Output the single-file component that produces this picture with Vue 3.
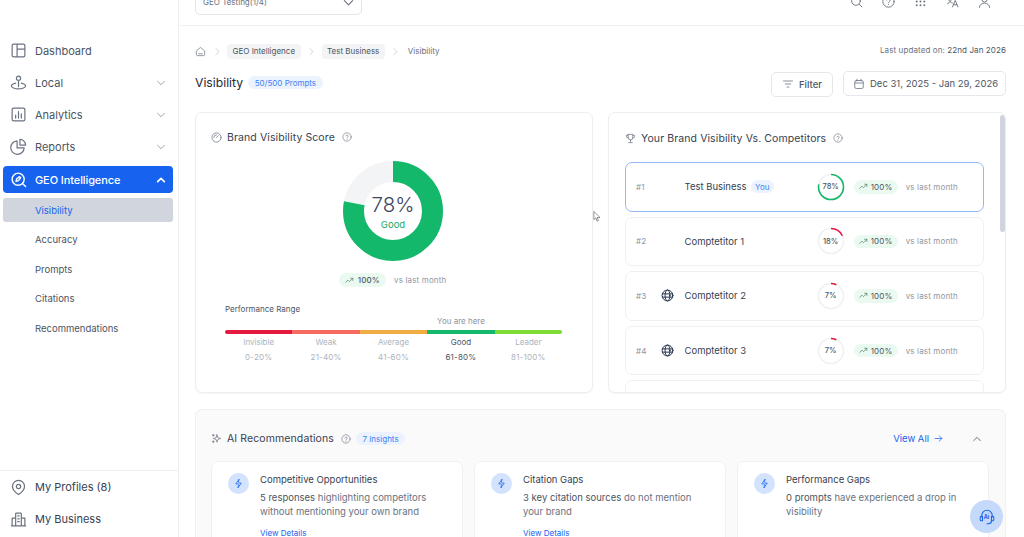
<template>
<div class="page">
	<aside class="sidebar">
		<nav class="nav">
			<div v-for="item in navItems" :key="item.label" class="nav-item" :class="{ active: item.active }">
				<svg class="nav-icon" viewBox="0 0 24 24"><path v-for="d in item.icon" :key="d" :d="d" /></svg>
				<span class="nav-label">{{ item.label }}</span>
				<svg v-if="item.caret" class="caret" viewBox="0 0 12 12"><path :d="item.active ? 'M2 8l4-4 4 4' : 'M2 4l4 4 4-4'" /></svg>
			</div>
			<div class="subnav">
				<div v-for="sub in subItems" :key="sub" class="sub-item" :class="{ current: sub == 'Visibility' }">{{ sub }}</div>
			</div>
		</nav>
		<div class="side-foot">
			<div v-for="item in footItems" :key="item.label" class="nav-item">
				<svg class="nav-icon" viewBox="0 0 24 24"><path v-for="d in item.icon" :key="d" :d="d" /></svg>
				<span class="nav-label dark">{{ item.label }}</span>
			</div>
		</div>
	</aside>

	<div class="content">
		<header class="topbar">
			<div class="select">
				<span>GEO Testing(1/4)</span>
				<svg class="select-caret" viewBox="0 0 12 12"><path d="M1.5 4l4.5 4.5L10.5 4" /></svg>
			</div>
			<div class="top-icons">
				<svg viewBox="0 0 24 24"><circle cx="11" cy="11" r="8" /><path d="M17 17l5 5" /></svg>
				<svg viewBox="0 0 24 24"><circle cx="12" cy="12" r="10.500" /><path d="M9.200 9.300a2.900 2.900 0 0 1 5.600 1c0 2-2.800 2.400-2.800 4M12 17.600v.2" /></svg>
				<svg viewBox="0 0 24 24" class="dots"><circle v-for="p in dots" :key="p[0] + '-' + p[1]" :cx="p[0]" :cy="p[1]" r="1.800" /></svg>
				<svg viewBox="0 0 24 24"><path d="M2 5h11M7 2v3M11 5c-1 5-4 9-8 11M5 9c1 3 4 5 7 6M12 22l5-12 5 12M14 18h6" /></svg>
				<svg viewBox="0 0 24 24"><circle cx="12" cy="8" r="5" /><path d="M2.500 23c.5-5 4.500-8 9.500-8s9 3 9.500 8" /></svg>
			</div>
		</header>

		<main class="main">
			<div class="crumb-row">
				<div class="crumbs">
					<svg class="home" viewBox="0 0 24 24"><path d="M3 11l9-8 9 8v8a2 2 0 0 1-2 2H5a2 2 0 0 1-2-2zM8 17h8" /></svg>
					<svg class="sep" viewBox="0 0 12 12"><path d="M4 2l4 4-4 4" /></svg>
					<span class="crumb">GEO Intelligence</span>
					<svg class="sep" viewBox="0 0 12 12"><path d="M4 2l4 4-4 4" /></svg>
					<span class="crumb">Test Business</span>
					<svg class="sep" viewBox="0 0 12 12"><path d="M4 2l4 4-4 4" /></svg>
					<span class="crumb-last">Visibility</span>
				</div>
				<div class="updated">Last updated on: <b>22nd Jan 2026</b></div>
			</div>

			<div class="title-row">
				<h1>Visibility</h1>
				<span class="badge up">50/500 Prompts</span>
				<div class="spacer"></div>
				<button class="btn filter">
					<svg viewBox="0 0 24 24"><path d="M3 6h18M6.500 12h11M10 18h4" /></svg>
					Filter
				</button>
				<button class="btn dates">
					<svg viewBox="0 0 24 24"><rect x="3.500" y="5" width="17" height="16" rx="3" /><path d="M3.500 10h17M8 2.500V6M16 2.500V6" /></svg>
					Dec 31, 2025 - Jan 29, 2026
				</button>
			</div>

			<div class="panels">
				<section class="panel score">
					<div class="panel-title">
						<svg class="t-icon" viewBox="0 0 24 24"><circle cx="12" cy="12" r="10" /><path d="M12 12l4-4M6 12a6 6 0 0 1 6-6" /></svg>
						<span>Brand Visibility Score</span>
						<svg class="help" viewBox="0 0 24 24"><circle cx="12" cy="12" r="10" /><path d="M9.200 9.300a2.900 2.900 0 0 1 5.600 1c0 2-2.800 2.400-2.800 4M12 17.600v.2" /></svg>
					</div>
					<div class="donut">
						<svg viewBox="0 0 100 100">
							<circle class="donut-bg" cx="50" cy="50" r="39.500" />
							<circle class="donut-fg" cx="50" cy="50" r="39.500" stroke-dasharray="193.600 248.200" transform="rotate(-90 50 50)" />
						</svg>
						<div class="donut-text">
							<div class="donut-num">78%</div>
							<div class="donut-word">Good</div>
						</div>
					</div>
					<div class="trend-row">
						<span class="pill">
							<svg viewBox="0 0 24 24"><path d="M2 17l6-6 4 4 9-9M15 6h6v6" /></svg>
							100%
						</span>
						<span class="vs">vs last month</span>
					</div>
					<div class="range-title">Performance Range</div>
					<div class="you-here">You are here</div>
					<div class="range">
						<div v-for="r in ranges" :key="r.name" class="range-col" :class="{ on: r.name == 'Good' }">
							<div class="range-bar" :style="{ background: r.color }"></div>
							<div class="range-name">{{ r.name }}</div>
							<div class="range-val">{{ r.val }}</div>
						</div>
					</div>
				</section>

				<section class="panel rivals">
					<div class="panel-title">
						<svg class="t-icon" viewBox="0 0 24 24"><path d="M7 3h10v7a5 5 0 0 1-10 0zM7 5H3v2a4 4 0 0 0 4 4M17 5h4v2a4 4 0 0 1-4 4M12 15v4M8 21h8" /></svg>
						<span>Your Brand Visibility Vs. Competitors</span>
						<svg class="help" viewBox="0 0 24 24"><circle cx="12" cy="12" r="10" /><path d="M9.200 9.300a2.900 2.900 0 0 1 5.600 1c0 2-2.800 2.400-2.800 4M12 17.600v.2" /></svg>
					</div>
					<div class="rows">
						<div v-for="(row, i) in rows" :key="i" class="row" :class="{ mine: row.you }">
							<span class="rank">#{{ i + 1 }}</span>
							<span class="globe">
								<svg v-if="row.globe" viewBox="0 0 24 24"><circle cx="12" cy="12" r="10" /><ellipse cx="12" cy="12" rx="4.500" ry="10" /><path d="M2.500 9h19M2.500 15h19" /></svg>
							</span>
							<span class="name">{{ row.name }}</span>
							<span v-if="row.you" class="you">You</span>
							<div class="spacer"></div>
							<div class="ring">
								<svg viewBox="0 0 28 28">
									<circle class="ring-bg" cx="14" cy="14" r="12.500" />
									<circle class="ring-fg" cx="14" cy="14" r="12.500" :stroke="row.color" :stroke-dasharray="(row.pct * 0.785) + ' 78.500'" transform="rotate(-90 14 14)" />
								</svg>
								<span>{{ row.pct }}%</span>
							</div>
							<span class="pill small">
								<svg viewBox="0 0 24 24"><path d="M2 17l6-6 4 4 9-9M15 6h6v6" /></svg>
								100%
							</span>
							<span class="vs">vs last month</span>
						</div>
						<!-- next row only peeks in above the fold -->
						<div class="row"></div>
					</div>
					<div class="scroll-thumb"></div>
				</section>
			</div>

			<section class="recs">
				<div class="recs-head">
					<svg class="t-icon" viewBox="0 0 24 24"><path d="M13 4l2 6 6 2-6 2-2 6-2-6-6-2 6-2zM5 3v4M3 5h4M5 17v4M3 19h4" /></svg>
					<span class="recs-title">AI Recommendations</span>
					<svg class="help" viewBox="0 0 24 24"><circle cx="12" cy="12" r="10" /><path d="M9.200 9.300a2.900 2.900 0 0 1 5.600 1c0 2-2.800 2.400-2.800 4M12 17.600v.2" /></svg>
					<span class="badge">7 Insights</span>
					<div class="spacer"></div>
					<span class="view-all">View All
						<svg viewBox="0 0 24 24"><path d="M3 12h18M14 5l7 7-7 7" /></svg>
					</span>
					<svg class="recs-caret" viewBox="0 0 12 12"><path d="M2 8l4-4 4 4" /></svg>
				</div>
				<div class="rec-grid">
					<div v-for="c in recCards" :key="c.title" class="rec">
						<span class="bolt">
							<svg viewBox="0 0 24 24"><path d="M13 3L6 13h5M11 21l7-10h-5M13 3l-1 6M11 21l1-6" /></svg>
						</span>
						<div class="rec-body">
							<div class="rec-title">{{ c.title }}</div>
							<p><b>{{ c.lead }}</b> {{ c.text }}</p>
							<a v-if="c.link" class="rec-link">View Details</a>
						</div>
					</div>
				</div>
			</section>
		</main>
	</div>

	<div class="assist">
		<svg viewBox="0 0 24 24"><path d="M5 12V10a7 7 0 0 1 14 0v2M5 11h-.5A1.500 1.500 0 0 0 3 12.500v3A1.500 1.500 0 0 0 4.500 17H6v-6zM19 11h.5a1.500 1.500 0 0 1 1.500 1.500v3a1.500 1.500 0 0 1-1.500 1.500H18v-6zM18 17c0 2.500-2 4-4 4h-2" /></svg>
		<span>Ai</span>
	</div>

	<svg class="cursor" viewBox="0 0 10 14"><path d="M1 1v10l2.500-2.200L5.200 13l1.600-.7L5 8.300h3.300z" /></svg>
</div>
</template>

<script setup>
	const navItems = [
		{ label: 'Dashboard', icon: ['M5 3h14a2 2 0 0 1 2 2v14a2 2 0 0 1-2 2H5a2 2 0 0 1-2-2V5a2 2 0 0 1 2-2zM10 3v18M10 10h11'] },
		{ label: 'Local', caret: true, icon: ['M12 3a3 3 0 1 1 0 6 3 3 0 0 1 0-6zM12 9v9M8 13c-3 .7-6 2-6 4s4.500 4 10 4 10-2 10-4-3-3.300-6-4'] },
		{ label: 'Analytics', caret: true, icon: ['M5 3h14a2 2 0 0 1 2 2v14a2 2 0 0 1-2 2H5a2 2 0 0 1-2-2V5a2 2 0 0 1 2-2zM8 17v-4M12 17V8M16 17v-6'] },
		{ label: 'Reports', caret: true, icon: ['M10 4a9.500 9.500 0 1 0 10 10H10zM14 2a8 8 0 0 1 8 8h-8z'] },
		{ label: 'GEO Intelligence', caret: true, active: true, icon: ['M11.500 3a8.500 8.500 0 1 1 0 17 8.500 8.500 0 0 1 0-17zM18 18l4 4M8.500 14.500l1-3.500 4-3 1.500 1.500-3 4z'] },
	]
	const subItems = ['Visibility', 'Accuracy', 'Prompts', 'Citations', 'Recommendations']
	const footItems = [
		{ label: 'My Profiles (8)', icon: ['M12 2a8.500 8.500 0 0 1 8.500 8.500c0 5-5 9-8.500 11.500-3.500-2.500-8.500-6.500-8.500-11.500A8.500 8.500 0 0 1 12 2zM12 7.500a3 3 0 1 1 0 6 3 3 0 0 1 0-6z'] },
		{ label: 'My Business', icon: ['M8 21V4a1 1 0 0 1 1-1h6a1 1 0 0 1 1 1v17M8 10H3v11h18V10h-5M11 7h2M11 11h2M11 15h2M2 21h20'] },
	]
	const dots = [[5, 5], [12, 5], [19, 5], [5, 12], [12, 12], [19, 12], [5, 19], [12, 19], [19, 19]]
	const ranges = [
		{ name: 'Invisible', val: '0-20%', color: '#e5183f' },
		{ name: 'Weak', val: '21-40%', color: '#f56b5f' },
		{ name: 'Average', val: '41-60%', color: '#f0ad44' },
		{ name: 'Good', val: '61-80%', color: '#14b86b' },
		{ name: 'Leader', val: '81-100%', color: '#7ddc35' },
	]
	const rows = [
		{ name: 'Test Business', you: true, pct: 78, color: '#14b86b' },
		{ name: 'Comptetitor 1', pct: 18, color: '#e5183f' },
		{ name: 'Comptetitor 2', globe: true, pct: 7, color: '#e5183f' },
		{ name: 'Comptetitor 3', globe: true, pct: 7, color: '#e5183f' },
	]
	const recCards = [
		{ title: 'Competitive Opportunities', lead: '5 responses', text: 'highlighting competitors without mentioning your own brand', link: true },
		{ title: 'Citation Gaps', lead: '3 key citation sources', text: 'do not mention your brand', link: true },
		{ title: 'Performance Gaps', lead: '0 prompts', text: 'have experienced a drop in visibility', link: false },
	]
</script>

<style>
	html, body { margin: 0; overflow: hidden; background: #fff; }
</style>

<style scoped>
	.page {
		display: flex;
		position: relative;
		width: 1024px;
		height: 537px;
		overflow: hidden;
		font-family: Inter, "Liberation Sans", sans-serif;
		color: #374151;
		background: #fff;
	}
	svg { fill: none; stroke: currentColor; stroke-linecap: round; stroke-linejoin: round; stroke-width: 1.6; flex: none; }
	.spacer { flex: 1; }

	.sidebar {
		width: 178px;
		flex: none;
		display: flex;
		flex-direction: column;
		border-right: 1px solid #eceef1;
	}
	.nav { flex: 1; padding: 37px 5px 0 3px; }
	.nav-item {
		display: flex;
		align-items: center;
		height: 27px;
		margin-bottom: 5px;
		padding-left: 7px;
		padding-right: 6px;
		border-radius: 4px;
		font-size: 11px;
		color: #4b5563;
	}
	.nav-icon { width: 17px; height: 17px; margin-right: 8px; color: #6b7280; stroke-width: 1.7; }
	.nav-label { flex: 1; }
	.nav-label.dark { color: #374151; }
	.caret { width: 10px; height: 10px; margin-right: 1px; color: #9ca3af; stroke-width: 1.2; }
	.nav-item.active { background: #1763f0; color: #fff; font-weight: 500; letter-spacing: -.1px; margin-top: 6px; margin-bottom: 5px; }
	.nav-item.active .nav-icon, .nav-item.active .caret { color: #fff; stroke-width: 2; }
	.subnav { display: flex; flex-direction: column; }
	.sub-item {
		display: flex;
		align-items: center;
		height: 24px;
		margin-bottom: 5.500px;
		padding-left: 32px;
		border-radius: 3px;
		font-size: 9.500px;
		color: #4b5563;
	}
	.sub-item.current { background: #d1d5dd; color: #1763f0; }
	.side-foot { border-top: 1px solid #f0f1f3; padding: 2.500px 5px 0 3px; height: 67px; box-sizing: border-box; }
	.side-foot .nav-item { margin-bottom: 5px; }

	.content { flex: 1; min-width: 0; display: flex; flex-direction: column; }
	.topbar {
		display: flex;
		align-items: flex-start;
		justify-content: space-between;
		height: 26px;
		box-sizing: border-box;
		flex: none;
		padding: 0 33px 0 16px;
		border-bottom: 1px solid #f0f1f3;
	}
	.select {
		display: flex;
		align-items: center;
		justify-content: space-between;
		width: 167px;
		height: 26px;
		margin-top: -11px;
		padding: 0 7px;
		box-sizing: border-box;
		border: 1px solid #e3e5e9;
		border-radius: 5px;
		font-size: 8px;
		color: #6b7280;
	}
	.select-caret { width: 11px; height: 11px; color: #6b7280; stroke-width: 1.2; }
	.top-icons {
		display: flex;
		gap: 19px;
		margin-top: -5px;
		color: #6b7280;
	}
	.top-icons svg { width: 13px; height: 13px; stroke-width: 1.7; }
	.top-icons .dots { fill: currentColor; stroke: none; }

	.main { padding: 0 18px 0 16px; }
	.crumb-row { display: flex; align-items: center; justify-content: space-between; height: 18px; margin-top: 16px; }
	.crumbs { display: flex; align-items: center; }
	.home { width: 11px; height: 11px; color: #6b7280; }
	.sep { width: 9px; height: 9px; color: #c6cad1; margin: 0 5px 0 7px; stroke-width: 1.1; }
	.crumb {
		display: inline-flex;
		align-items: center;
		height: 15px;
		padding: 0 5.500px;
		border-radius: 4px;
		background: #f3f4f6;
		font-size: 8px;
		color: #4b5563;
	}
	.crumb + .sep { margin-left: 6px; margin-right: 6px; }
	.crumb-last { font-size: 8px; color: #6b7280; margin-left: 2px; }
	.updated { font-size: 8px; color: #6b7280; margin-top: -3px; letter-spacing: .1px; }
	.updated b { font-weight: 400; color: #4b5563; }

	.title-row { display: flex; align-items: center; height: 26px; margin-top: 11px; }
	h1 { margin: 0 0 3px; font-size: 12.200px; font-weight: 400; color: #1f2937; }
	.badge {
		display: inline-flex;
		align-items: center;
		height: 13px;
		padding: 0 6.500px;
		margin-left: 5px;
		border-radius: 7px;
		background: #edf3fe;
		font-size: 8px;
		color: #3b82f6;
	}
	.badge.up { margin-bottom: 3px; }
	.btn {
		display: flex;
		align-items: center;
		height: 25px;
		padding: 0 10px;
		box-sizing: border-box;
		border: 1px solid #e5e7eb;
		border-radius: 5px;
		background: #fff;
		font: inherit;
		font-size: 9.500px;
		color: #4b5563;
		white-space: nowrap;
	}
	.btn svg { width: 12px; height: 12px; color: #6b7280; }
	.filter { width: 62px; gap: 5px; margin-right: 10px; font-weight: 500; }
	.dates { width: 163px; gap: 5px; padding: 0 8px 0 9px; margin-top: -1px; }

	.panels { display: flex; gap: 15px; margin-top: 15px; }
	.panel {
		position: relative;
		height: 281px;
		box-sizing: border-box;
		border: 1px solid #eceef1;
		border-radius: 7px;
		background: #fff;
		box-shadow: 0 1px 2px rgba(0, 0, 0, .04);
		overflow: hidden;
	}
	.score { width: 398px; padding: 16px 15px 0; }
	.rivals { width: 398px; padding: 17px 0 0 16px; }
	.panel-title { display: flex; align-items: center; height: 16px; font-size: 10.500px; color: #374151; letter-spacing: .1px; }
	.t-icon { width: 11px; height: 11px; margin-right: 5px; color: #6b7280; }
	.help { width: 10px; height: 10px; margin-left: 7px; color: #6b7280; stroke-width: 1.5; }

	.donut { position: relative; width: 100px; height: 100px; margin: 16px 0 0 132px; }
	.donut svg { display: block; width: 100%; height: 100%; }
	.donut-bg { stroke: #f3f4f6; stroke-width: 21; }
	.donut-fg { stroke: #14b86b; stroke-width: 21; stroke-linecap: butt; }
	.donut-text { position: absolute; inset: 0; display: flex; flex-direction: column; align-items: center; padding-top: 32px; box-sizing: border-box; }
	.donut-num { font-size: 20.500px; font-weight: 300; line-height: 24px; color: #3b4563; }
	.donut-word { font-size: 9.500px; line-height: 14px; color: #22a868; margin-top: .5px; }

	.trend-row { display: flex; align-items: center; justify-content: center; gap: 8px; margin-top: 12px; margin-left: -3px; }
	.pill {
		display: inline-flex;
		align-items: center;
		gap: 4px;
		height: 14px;
		padding: 0 6px;
		border-radius: 8px;
		background: #eafaf1;
		font-size: 8px;
		font-weight: 500;
		color: #4b5563;
		letter-spacing: .2px;
	}
	.pill svg { width: 9px; height: 9px; color: #4b7a65; stroke-width: 1.8; }
	.vs { font-size: 8px; color: #9097a3; letter-spacing: .15px; }

	.range-title { margin: 17px 0 0 14px; font-size: 8px; line-height: 11px; color: #4b5563; }
	.you-here { margin: 0 0 0 219px; width: 62px; text-align: center; font-size: 8px; line-height: 12px; color: #8b93a0; }
	.range { display: flex; width: 337px; margin: 3px 0 0 14px; }
	.range-col { flex: 1; text-align: center; font-size: 8px; color: #adb3bd; }
	.range-bar { height: 4px; margin-bottom: 2px; }
	.range-col:first-child .range-bar { border-radius: 2px 0 0 2px; }
	.range-col:last-child .range-bar { border-radius: 0 2px 2px 0; }
	.range-name { line-height: 12px; }
	.range-val { line-height: 12px; margin-top: 3px; letter-spacing: .2px; }
	.range-col.on { color: #4b5563; }

	.rows { display: flex; flex-direction: column; gap: 5.100px; margin-top: 16px; }
	.row {
		display: flex;
		align-items: center;
		flex: none;
		width: 359px;
		height: 49.500px;
		padding: 0 25px 0 10px;
		box-sizing: border-box;
		border: 1px solid #eff0f3;
		border-radius: 7px;
		background: #fff;
	}
	.row.mine { border-color: #93b8f3; }
	.rank { width: 25px; font-size: 8px; color: #8b93a0; letter-spacing: .3px; }
	.globe { width: 23.500px; display: flex; }
	.globe svg { width: 13px; height: 13px; color: #1f2d4a; stroke-width: 1.8; }
	.name { font-size: 9.500px; color: #374151; }
	.you {
		display: inline-flex;
		align-items: center;
		height: 13px;
		padding: 0 4.500px;
		margin-left: 4px;
		border-radius: 7px;
		background: #edf3fe;
		font-size: 8px;
		color: #3b82f6;
	}
	.ring { position: relative; width: 28px; height: 28px; margin-right: 9px; }
	.ring svg { display: block; width: 100%; height: 100%; }
	.ring-bg { stroke: #f0f1f3; stroke-width: 1.600; }
	.ring-fg { stroke-width: 1.600; stroke-linecap: butt; }
	.ring span { position: absolute; inset: 0; display: flex; align-items: center; justify-content: center; font-size: 7.500px; font-weight: 500; color: #4b5563; }
	.pill.small { height: 13.500px; padding: 0 5px; margin-right: 8px; font-weight: 400; gap: 3px; }
	.scroll-thumb { position: absolute; top: 2px; right: 0; width: 5px; height: 117px; border-radius: 3px; background: #d0d4dd; }

	.recs {
		margin-top: 16px;
		height: 200px;
		box-sizing: border-box;
		padding: 0 16px 0 15px;
		border: 1px solid #f0f1f3;
		border-radius: 7px;
		background: #fafafb;
	}
	.recs-head { display: flex; align-items: center; height: 51px; padding-top: 6px; box-sizing: border-box; font-size: 10.500px; }
	.recs-title { color: #374151; letter-spacing: .1px; }
	.view-all { display: flex; align-items: center; gap: 5px; font-size: 9.500px; color: #1763f0; margin-right: 29px; }
	.view-all svg { width: 9px; height: 9px; stroke-width: 2; }
	.recs-caret { width: 10px; height: 10px; color: #6b7280; margin-right: 7px; stroke-width: 1.2; }
	.rec-grid { display: flex; gap: 11px; }
	.rec {
		display: flex;
		width: 252px;
		height: 120px;
		padding: 11px 16px;
		box-sizing: border-box;
		border: 1px solid #f0f1f3;
		border-radius: 7px;
		background: #fff;
	}
	.bolt {
		display: flex;
		align-items: center;
		justify-content: center;
		flex: none;
		width: 21px;
		height: 21px;
		margin-right: 11px;
		border-radius: 50%;
		background: #d3e2fd;
		color: #1763f0;
	}
	.bolt svg { width: 11px; height: 11px; stroke-width: 1.7; }
	.rec-title { font-size: 9.500px; line-height: 14px; color: #374151; }
	.rec p { margin: 4px 0 0; font-size: 9.500px; line-height: 14px; color: #6b7280; }
	.rec p b { font-weight: 400; color: #4b5563; }
	.rec-link { display: block; margin-top: 9px; font-size: 8px; color: #1763f0; }

	.assist {
		position: absolute;
		left: 970px;
		top: 500px;
		display: flex;
		align-items: center;
		justify-content: center;
		width: 33px;
		height: 33px;
		border-radius: 50%;
		background: #c5d9fa;
		color: #1763f0;
	}
	.assist svg { width: 18px; height: 18px; stroke-width: 1.4; }
	.assist span { position: absolute; font-size: 5.500px; font-weight: 700; }
	.cursor { position: absolute; left: 593px; top: 211px; width: 8px; height: 11px; fill: #fff; stroke: #555; stroke-width: .8; }
</style>
